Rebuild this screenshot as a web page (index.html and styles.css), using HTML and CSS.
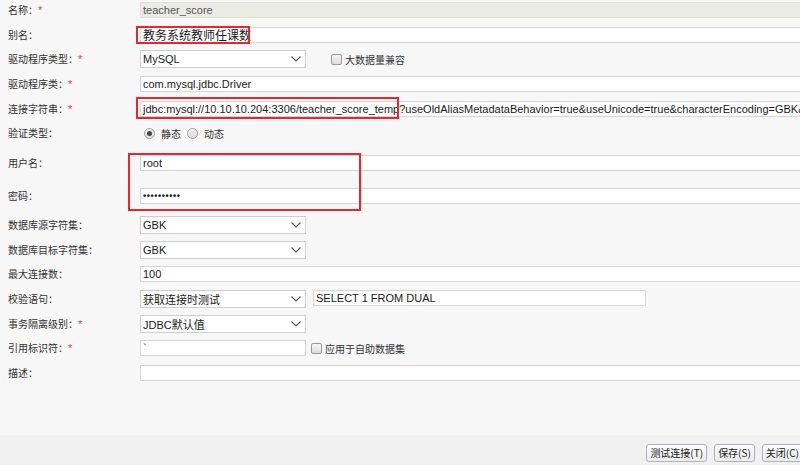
FILE: index.html
```html
<!DOCTYPE html>
<html lang="zh">
<head>
<meta charset="utf-8">
<title>数据连接</title>
<link rel="stylesheet" href="styles.css">
</head>
<body>
<div class="form">
  <div class="row">
    <div class="label">名称：<span class="req">*</span></div>
    <div class="field wide disabled">teacher_score</div>
  </div>
  <div class="row h23">
    <div class="label">别名：</div>
    <div class="field wide"><span class="big">教务系统教师任课数</span></div>
  </div>
  <div class="row h26 sel">
    <div class="label">驱动程序类型：<span class="req">*</span></div>
    <div class="select"><span>MySQL</span><svg class="chev" width="10" height="6" viewBox="0 0 10 6"><path d="M0.5 0.5 L5 5 L9.5 0.5" fill="none" stroke="#555" stroke-width="1.1"/></svg></div>
    <label class="check"><span class="box"></span>大数据量兼容</label>
  </div>
  <div class="row">
    <div class="label">驱动程序类：<span class="req">*</span></div>
    <div class="field wide">com.mysql.jdbc.Driver</div>
  </div>
  <div class="row h24">
    <div class="label">连接字符串：<span class="req">*</span></div>
    <div class="field wide">jdbc:mysql://10.10.10.204:3306/teacher_score_temp?useOldAliasMetadataBehavior=true&amp;useUnicode=true&amp;characterEncoding=GBK&amp;zeroDateTimeBehavior=convertToNull</div>
  </div>
  <div class="row h30">
    <div class="label">验证类型：</div>
    <div class="radios">
      <span class="radio on"></span><span class="rtext">静态</span>
      <span class="radio"></span><span class="rtext">动态</span>
    </div>
  </div>
  <div class="row h33">
    <div class="label">用户名：</div>
    <div class="field wide">root</div>
  </div>
  <div class="row h28">
    <div class="label">密码：</div>
    <div class="field wide pwd">••••••••••</div>
  </div>
  <div class="row sel">
    <div class="label">数据库源字符集：</div>
    <div class="select"><span>GBK</span><svg class="chev" width="10" height="6" viewBox="0 0 10 6"><path d="M0.5 0.5 L5 5 L9.5 0.5" fill="none" stroke="#555" stroke-width="1.1"/></svg></div>
  </div>
  <div class="row sel">
    <div class="label">数据库目标字符集：</div>
    <div class="select"><span>GBK</span><svg class="chev" width="10" height="6" viewBox="0 0 10 6"><path d="M0.5 0.5 L5 5 L9.5 0.5" fill="none" stroke="#555" stroke-width="1.1"/></svg></div>
  </div>
  <div class="row h24">
    <div class="label">最大连接数：</div>
    <div class="field wide">100</div>
  </div>
  <div class="row sel">
    <div class="label">校验语句：</div>
    <div class="select"><span>获取连接时测试</span><svg class="chev" width="10" height="6" viewBox="0 0 10 6"><path d="M0.5 0.5 L5 5 L9.5 0.5" fill="none" stroke="#555" stroke-width="1.1"/></svg></div>
    <div class="field sql">SELECT 1 FROM DUAL</div>
  </div>
  <div class="row sel">
    <div class="label">事务隔离级别：<span class="req">*</span></div>
    <div class="select"><span>JDBC默认值</span><svg class="chev" width="10" height="6" viewBox="0 0 10 6"><path d="M0.5 0.5 L5 5 L9.5 0.5" fill="none" stroke="#555" stroke-width="1.1"/></svg></div>
  </div>
  <div class="row">
    <div class="label">引用标识符：<span class="req">*</span></div>
    <div class="field short">`</div>
    <label class="check near"><span class="box"></span>应用于自助数据集</label>
  </div>
  <div class="row">
    <div class="label">描述：</div>
    <div class="field wide"></div>
  </div>
</div>
<div class="footer">
  <button class="btn">测试连接(T)</button>
  <button class="btn">保存(S)</button>
  <button class="btn">关闭(C)</button>
</div>
<div class="mark mark-alias"></div>
<div class="mark mark-url"></div>
<div class="mark mark-user"></div>
</body>
</html>
```

FILE: styles.css
```css
html, body {
  margin: 0;
  padding: 0;
  overflow: hidden;
}
body {
  width: 800px;
  height: 465px;
  background: #f7f7f7;
  font-family: "Liberation Sans", "Noto Sans CJK SC", sans-serif;
  font-size: 11px;
  color: #333;
  display: flex;
  flex-direction: column;
  position: relative;
}
.form {
  flex: 1;
  padding-top: 2px;
}
.row {
  display: flex;
  align-items: flex-start;
  height: 25px;
}
.h23 { height: 23px; }
.h24 { height: 24px; }
.h26 { height: 26px; }
.h28 { height: 28px; }
.h30 { height: 30px; }
.h33 { height: 33px; }
.label {
  flex: none;
  width: 132px;
  padding-left: 8px;
  height: 16px;
  line-height: 16px;
  font-family: "Noto Sans CJK SC", sans-serif;
  font-size: 10px;
  color: #333;
  white-space: nowrap;
}
.sel .label {
  height: 18px;
  line-height: 18px;
}
.req {
  color: #e5393b;
  font-family: "Liberation Sans", sans-serif;
  font-size: 11px;
}
.field {
  flex: none;
  box-sizing: border-box;
  height: 16px;
  border: 1px solid #d6d6d6;
  background: #fff;
  line-height: 14px;
  padding-left: 2px;
  color: #1a1a1a;
  white-space: nowrap;
  overflow: hidden;
}
.big {
  font-size: 12px;
  font-family: "Noto Sans CJK SC", sans-serif;
}
.wide { width: 700px; }
.disabled {
  background: #ebebe5;
  border-color: #e0e0da;
  color: #555;
}
.pwd {
  font-size: 9px;
  font-weight: bold;
  letter-spacing: 0.6px;
  line-height: 14px;
  color: #111;
}
.short { width: 166px; }
.sql {
  width: 333px;
  margin-left: 7px;
  color: #1a1a1a;
}
.select {
  flex: none;
  box-sizing: border-box;
  width: 166px;
  height: 18px;
  border: 1px solid #cfcfcf;
  background: #fff;
  display: flex;
  align-items: center;
  justify-content: space-between;
  padding: 0 4px 0 2px;
  color: #1a1a1a;
  white-space: nowrap;
}
.select span {
  font-family: "Liberation Sans", "Noto Sans CJK SC", sans-serif;
}
.chev { display: block; }
.check {
  display: flex;
  align-items: center;
  height: 18px;
  margin-left: 25px;
  color: #333;
  font-family: "Noto Sans CJK SC", sans-serif;
  font-size: 10px;
}
.check.near {
  height: 16px;
  margin-left: 5px;
}
.box {
  display: inline-block;
  box-sizing: border-box;
  width: 11px;
  height: 11px;
  border: 1px solid #9a9a9a;
  border-radius: 2px;
  background: linear-gradient(#f4f4f4, #dedede);
  margin-right: 3px;
}
.radios {
  display: flex;
  align-items: center;
  height: 16px;
  padding-left: 4px;
}
.radio {
  box-sizing: border-box;
  width: 11px;
  height: 11px;
  border: 1px solid #a0a0a0;
  border-radius: 50%;
  background: linear-gradient(#f2f2f2, #dcdcdc);
  display: flex;
  align-items: center;
  justify-content: center;
}
.radio.on::after {
  content: "";
  width: 5px;
  height: 5px;
  border-radius: 50%;
  background: #444;
}
.rtext {
  font-family: "Noto Sans CJK SC", sans-serif;
  font-size: 10px;
  margin-left: 6px;
  margin-right: 6px;
  color: #333;
}
.footer {
  flex: none;
  height: 30px;
  background: #f1f1f1;
  display: flex;
  justify-content: flex-end;
  align-items: flex-start;
  gap: 7px;
  padding-top: 9px;
  box-sizing: border-box;
  width: 803px;
}
.btn {
  box-sizing: border-box;
  height: 18px;
  padding: 0 3px;
  border: 1px solid #adb2bb;
  border-radius: 3px;
  background: linear-gradient(#fdfdfd, #ececec);
  font-family: "Noto Sans CJK SC", sans-serif;
  font-size: 10px;
  line-height: 16px;
  color: #222;
  white-space: nowrap;
}
.mark {
  position: absolute;
  border: 2px solid #e8262b;
  box-sizing: border-box;
}
.mark-alias {
  left: 136px;
  top: 26px;
  width: 114px;
  height: 18px;
}
.mark-url {
  left: 136px;
  top: 97px;
  width: 263px;
  height: 22px;
}
.mark-user {
  left: 128px;
  top: 153px;
  width: 233px;
  height: 58px;
}
```
